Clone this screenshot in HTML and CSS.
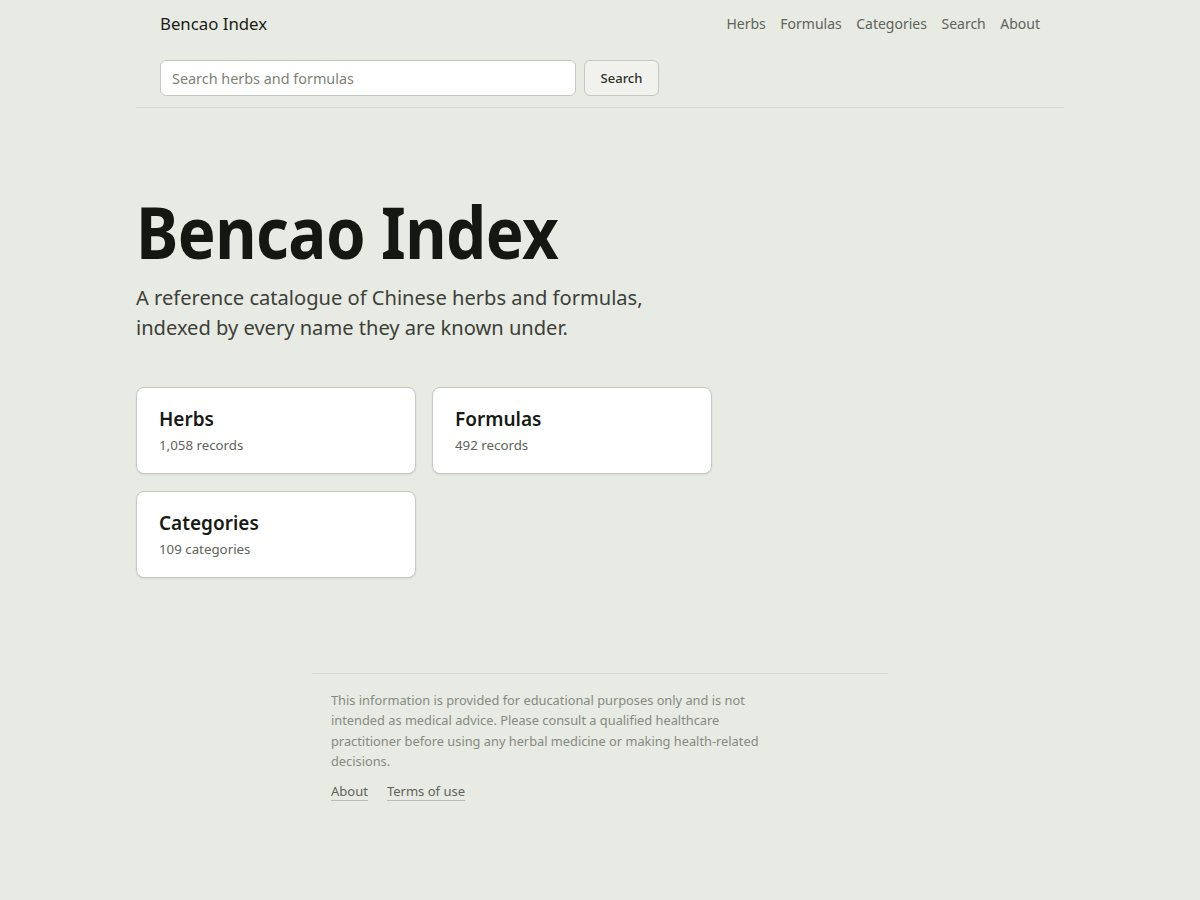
FILE: index.html
```html
<!DOCTYPE html>
<html lang="en">
<head>
<meta charset="utf-8">
<title>Bencao Index</title>
<link rel="stylesheet" href="styles.css">
</head>
<body>
<header class="site-header">
  <div class="header-top">
    <a class="brand" href="#">Bencao Index</a>
    <nav class="nav">
      <a href="#">Herbs</a>
      <a href="#">Formulas</a>
      <a href="#">Categories</a>
      <a href="#">Search</a>
      <a href="#">About</a>
    </nav>
  </div>
  <form class="search">
    <input class="search-input" type="text" placeholder="Search herbs and formulas">
    <button class="search-btn" type="button">Search</button>
  </form>
</header>
<main class="main">
  <section class="hero">
    <h1>Bencao Index</h1>
    <p class="lede">A reference catalogue of Chinese herbs and formulas, indexed by every name they are known under.</p>
  </section>
  <section class="cards">
    <a class="card" href="#"><h2>Herbs</h2><p>1,058 records</p></a>
    <a class="card" href="#"><h2>Formulas</h2><p>492 records</p></a>
    <a class="card" href="#"><h2>Categories</h2><p>109 categories</p></a>
  </section>
</main>
<footer class="footer">
  <p class="disclaimer">This information is provided for educational purposes only and is not intended as medical advice. Please consult a qualified healthcare practitioner before using any herbal medicine or making health-related decisions.</p>
  <div class="footer-links">
    <a href="#">About</a>
    <a href="#">Terms of use</a>
  </div>
</footer>
</body>
</html>
```
FILE: styles.css
```css
* { box-sizing: border-box; }
html, body { margin: 0; padding: 0; }
body {
  background: #e8eae4;
  color: #141712;
  font-family: "Noto Sans", "DejaVu Sans", sans-serif;
}
a { color: inherit; text-decoration: none; }

.site-header {
  width: 928px;
  margin: 0 auto;
  padding: 11px 24px 11px;
  border-bottom: 1px solid #d9dcd5;
}
.header-top {
  display: flex;
  justify-content: space-between;
  align-items: center;
  height: 25px;
}
.brand {
  font-size: 16.8px;
  color: #1a1d18;
}
.nav {
  display: flex;
  gap: 14.5px;
}
.nav a {
  font-size: 14px;
  color: #5e6459;
}
.search {
  display: flex;
  gap: 8px;
  margin-top: 24px;
}
.search-input {
  width: 416px;
  height: 36px;
  border: 1px solid #c4c8c0;
  border-radius: 6px;
  background: #fff;
  padding: 0 11px;
  font-family: inherit;
  font-size: 14.4px;
  color: #1a1d18;
}
.search-input::placeholder { color: #7d8278; }
.search-btn {
  height: 36px;
  width: 75px;
  border: 1px solid #c4c8c0;
  border-radius: 6px;
  background: #f1f2ed;
  font-family: inherit;
  font-size: 13px;
  font-weight: 500;
  color: #2e322b;
}

.main {
  width: 928px;
  margin: 0 auto;
}
.hero {
  padding-top: 82px;
}
.hero h1 {
  margin: 0;
  font-size: 71px;
  font-weight: 700;
  letter-spacing: -0.6px;
  line-height: 84px;
  color: #141712;
  transform: scaleX(0.896);
  transform-origin: left center;
}
.lede {
  margin: 9px 0 0;
  max-width: 540px;
  font-size: 20.1px;
  line-height: 30px;
  color: #3b4038;
}
.cards {
  display: grid;
  grid-template-columns: 280px 280px;
  gap: 17px 16px;
  margin-top: 44px;
}
.card {
  display: block;
  height: 87px;
  background: #fff;
  border: 1px solid #c6cac2;
  border-radius: 8px;
  box-shadow: 0 1px 2px rgba(0,0,0,0.08);
  padding: 18px 22px 0;
}
.card h2 {
  margin: 0;
  font-size: 19px;
  font-weight: 600;
  line-height: 26px;
  color: #171a15;
}
.card p {
  margin: 4px 0 0;
  font-size: 13.3px;
  line-height: 18px;
  color: #5e6459;
}

.footer {
  width: 576px;
  margin: 95px auto 0;
  border-top: 1px solid #d9dcd5;
  padding: 16px 19px 40px;
}
.disclaimer {
  margin: 0;
  max-width: 440px;
  font-size: 12.8px;
  line-height: 20.3px;
  color: #858a81;
}
.footer-links {
  display: flex;
  gap: 19px;
  margin-top: 11px;
}
.footer-links a {
  font-size: 13px;
  line-height: 18px;
  color: #5e6459;
  border-bottom: 1px solid #b9bdb4;
}
```
